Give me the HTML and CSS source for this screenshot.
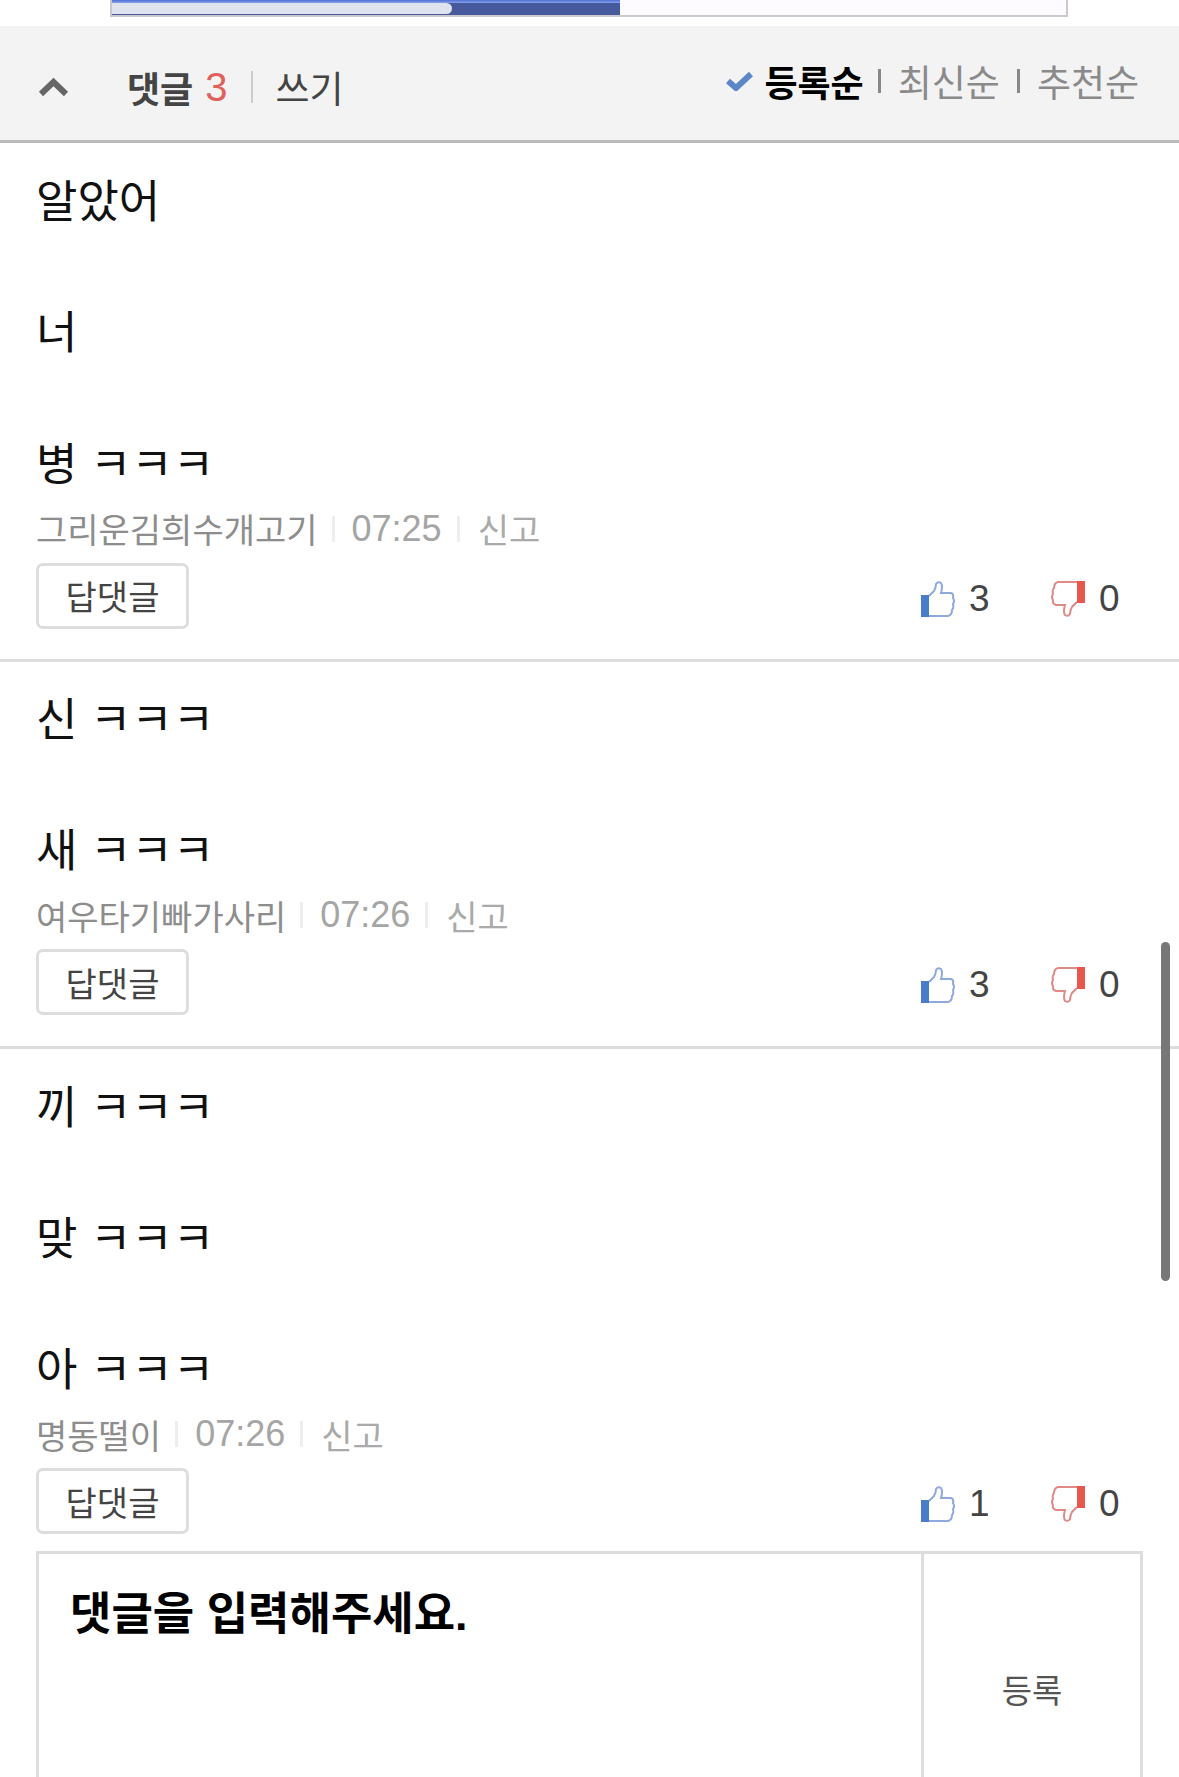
FILE: index.html
```html
<!DOCTYPE html>
<html lang="ko">
<head>
<meta charset="utf-8">
<title>댓글</title>
<link rel="stylesheet" href="styles.css">
</head>
<body>
<div class="page">
  <div class="progress"><div class="progress-fill"><div class="progress-thumb"></div></div></div>
  <header class="head">
    <div class="head-left">
      <svg class="chev" viewBox="0 0 31 20"><path d="M3 17L15.500 5L28 17" fill="none" stroke="#666" stroke-width="6"/></svg>
      <b class="head-title">댓글</b><span class="head-count">3</span><i class="head-sep"></i><span class="head-write">쓰기</span>
    </div>
    <div class="head-right">
      <svg class="check" viewBox="0 0 27 20"><path d="M2 10L10 17L25 3" fill="none" stroke="#5b87c9" stroke-width="6"/></svg>
      <b class="sort-on">등록순</b><i class="sort-sep"></i><span class="sort">최신순</span><i class="sort-sep"></i><span class="sort">추천순</span>
    </div>
  </header>

  <section class="comment comment-first">
    <p class="body">알았어<br><br>너<br><br>병 ㅋㅋㅋ</p>
    <div class="meta"><span class="author">그리운김희수개고기</span><i class="meta-sep"></i><span class="time">07:25</span><i class="meta-sep"></i><span class="report">신고</span></div>
    <div class="actions">
      <span class="reply">답댓글</span>
      <div class="votes">
        <svg class="thumb" viewBox="0 0 34 36"><use href="#up"/></svg><span class="num">3</span>
        <svg class="thumb down" viewBox="0 0 34 36"><use href="#dn"/></svg><span class="num">0</span>
      </div>
    </div>
  </section>

  <section class="comment">
    <p class="body">신 ㅋㅋㅋ<br><br>새 ㅋㅋㅋ</p>
    <div class="meta"><span class="author">여우타기빠가사리</span><i class="meta-sep"></i><span class="time">07:26</span><i class="meta-sep"></i><span class="report">신고</span></div>
    <div class="actions">
      <span class="reply">답댓글</span>
      <div class="votes">
        <svg class="thumb" viewBox="0 0 34 36"><use href="#up"/></svg><span class="num">3</span>
        <svg class="thumb down" viewBox="0 0 34 36"><use href="#dn"/></svg><span class="num">0</span>
      </div>
    </div>
  </section>

  <section class="comment comment-last">
    <p class="body">끼 ㅋㅋㅋ<br><br>맞 ㅋㅋㅋ<br><br>아 ㅋㅋㅋ</p>
    <div class="meta"><span class="author">명동떨이</span><i class="meta-sep"></i><span class="time">07:26</span><i class="meta-sep"></i><span class="report">신고</span></div>
    <div class="actions">
      <span class="reply">답댓글</span>
      <div class="votes">
        <svg class="thumb" viewBox="0 0 34 36"><use href="#up"/></svg><span class="num">1</span>
        <svg class="thumb down" viewBox="0 0 34 36"><use href="#dn"/></svg><span class="num">0</span>
      </div>
    </div>
  </section>

  <div class="compose">
    <div class="compose-input">댓글을 입력해주세요.</div>
    <div class="compose-send">등록</div>
  </div>

  <div class="scrollbar"></div>
</div>
<svg class="defs" width="0" height="0">
  <defs>
    <g id="up">
      <path d="M8 15L13 10Q15 7 15 3Q17 0 20 2Q22 5 20 12H30Q33 13 32 17Q34 20 32 23Q33 27 31 29Q31 34 27 35H8" fill="#fff" stroke="#8fa9dc" stroke-width="2"/>
      <rect x="0" y="14" width="8" height="22" fill="#4a7cc9"/>
    </g>
    <g id="dn">
      <path d="M26 21L21 26Q19 29 19 33Q17 36 14 34Q12 31 14 24H5Q1 23 2 19Q0 16 2 13Q1 9 3 7Q3 2 7 1H26" fill="#fff" stroke="#e08a85" stroke-width="2"/>
      <rect x="26" y="0" width="8" height="22" fill="#e8574e"/>
    </g>
  </defs>
</svg>
</body>
</html>
```
FILE: styles.css
```css
* { box-sizing: border-box; }
html, body { margin: 0; padding: 0; background: #fff; height: 1777px; overflow: hidden; }
body { font-family: "Liberation Sans", "Noto Sans CJK KR", sans-serif; color: #000; }
.page { position: relative; width: 1179px; height: 1777px; overflow: hidden; }
.defs { position: absolute; }

.progress { margin-left: 110px; width: 958px; height: 17px; border: 2px solid #c9c9cf; border-top: 0; background: #fdfbff; }
.progress-fill { width: 508px; height: 15px; padding-top: 3px; background: linear-gradient(#4f6fd6 0, #86a2ea 3px, #46599c 3px, #46599c 100%); }
.progress-thumb { width: 340px; height: 11px; background: #dfe3ee; border-radius: 0 6px 6px 0; }

.head { margin-top: 9px; height: 117px; background: #f3f3f3; border-bottom: 3px solid #bbb; display: flex; justify-content: space-between; padding: 0 40px 0 38px; }
.head-left { display: flex; align-items: center; padding-top: 8px; }
.head-right { display: flex; align-items: center; padding-bottom: 4px; }
.chev { width: 31px; height: 20px; margin-right: 58px; }
.head-title { font-size: 36px; color: #444; }
.head-count { font-size: 40px; color: #e0605c; margin-left: 12px; }
.head-sep { width: 2px; height: 32px; background: #ccc; margin: 0 23px; }
.head-write { font-size: 37px; color: #444; }
.check { width: 27px; height: 20px; margin-right: 11px; }
.sort-on { font-size: 36px; color: #000; }
.sort { font-size: 37px; color: #8a8a8a; }
.sort-sep { width: 3px; height: 24px; background: #888; margin: 0 17px; }
.sort-on + .sort-sep { margin-left: 14px; }

.comment { border-bottom: 3px solid #ddd; padding: 26.500px 36px 31px; }
.comment-first { padding-top: 27px; padding-bottom: 30px; }
.comment-last { border-bottom: 0; padding-bottom: 17px; }
.body { margin: 0; font-size: 45px; line-height: 65.700px; color: #111; }
.meta { display: flex; align-items: center; height: 60px; margin-bottom: 4px; font-size: 34px; color: #999; }
.author { color: #8d8d8d; }
.time { font-size: 36px; color: #a5a5a5; }
.report { color: #aaa; }
.meta-sep { width: 3px; height: 26px; background: #eee; margin: 0 17px 0 14px; }
.time + .meta-sep { margin: 0 18px 0 15px; }
.actions { display: flex; justify-content: space-between; align-items: center; height: 66px; }
.reply { width: 153px; height: 66px; border: 3px solid #ddd; border-radius: 7px; font-size: 34px; color: #444; display: flex; align-items: center; justify-content: center; }
.votes { display: flex; align-items: center; padding: 6px 23px 0 0; }
.thumb { width: 34px; height: 36px; }
.down { margin-left: 61px; }
.num { font-size: 37px; color: #444; margin-left: 14px; width: 21px; }

.compose { margin: 0 36px; height: 400px; border: 3px solid #ddd; border-bottom: 0; display: flex; }
.compose-input { flex: 1; padding: 30px 0 0 31px; font-size: 45px; line-height: 62px; font-weight: 700; color: #000; border-right: 3px solid #ddd; }
.compose-send { width: 216px; height: 270px; font-size: 33px; color: #555; display: flex; align-items: center; justify-content: center; }

.scrollbar { position: absolute; left: 1161px; top: 942px; width: 9px; height: 339px; border-radius: 5px; background: #777; }
```
